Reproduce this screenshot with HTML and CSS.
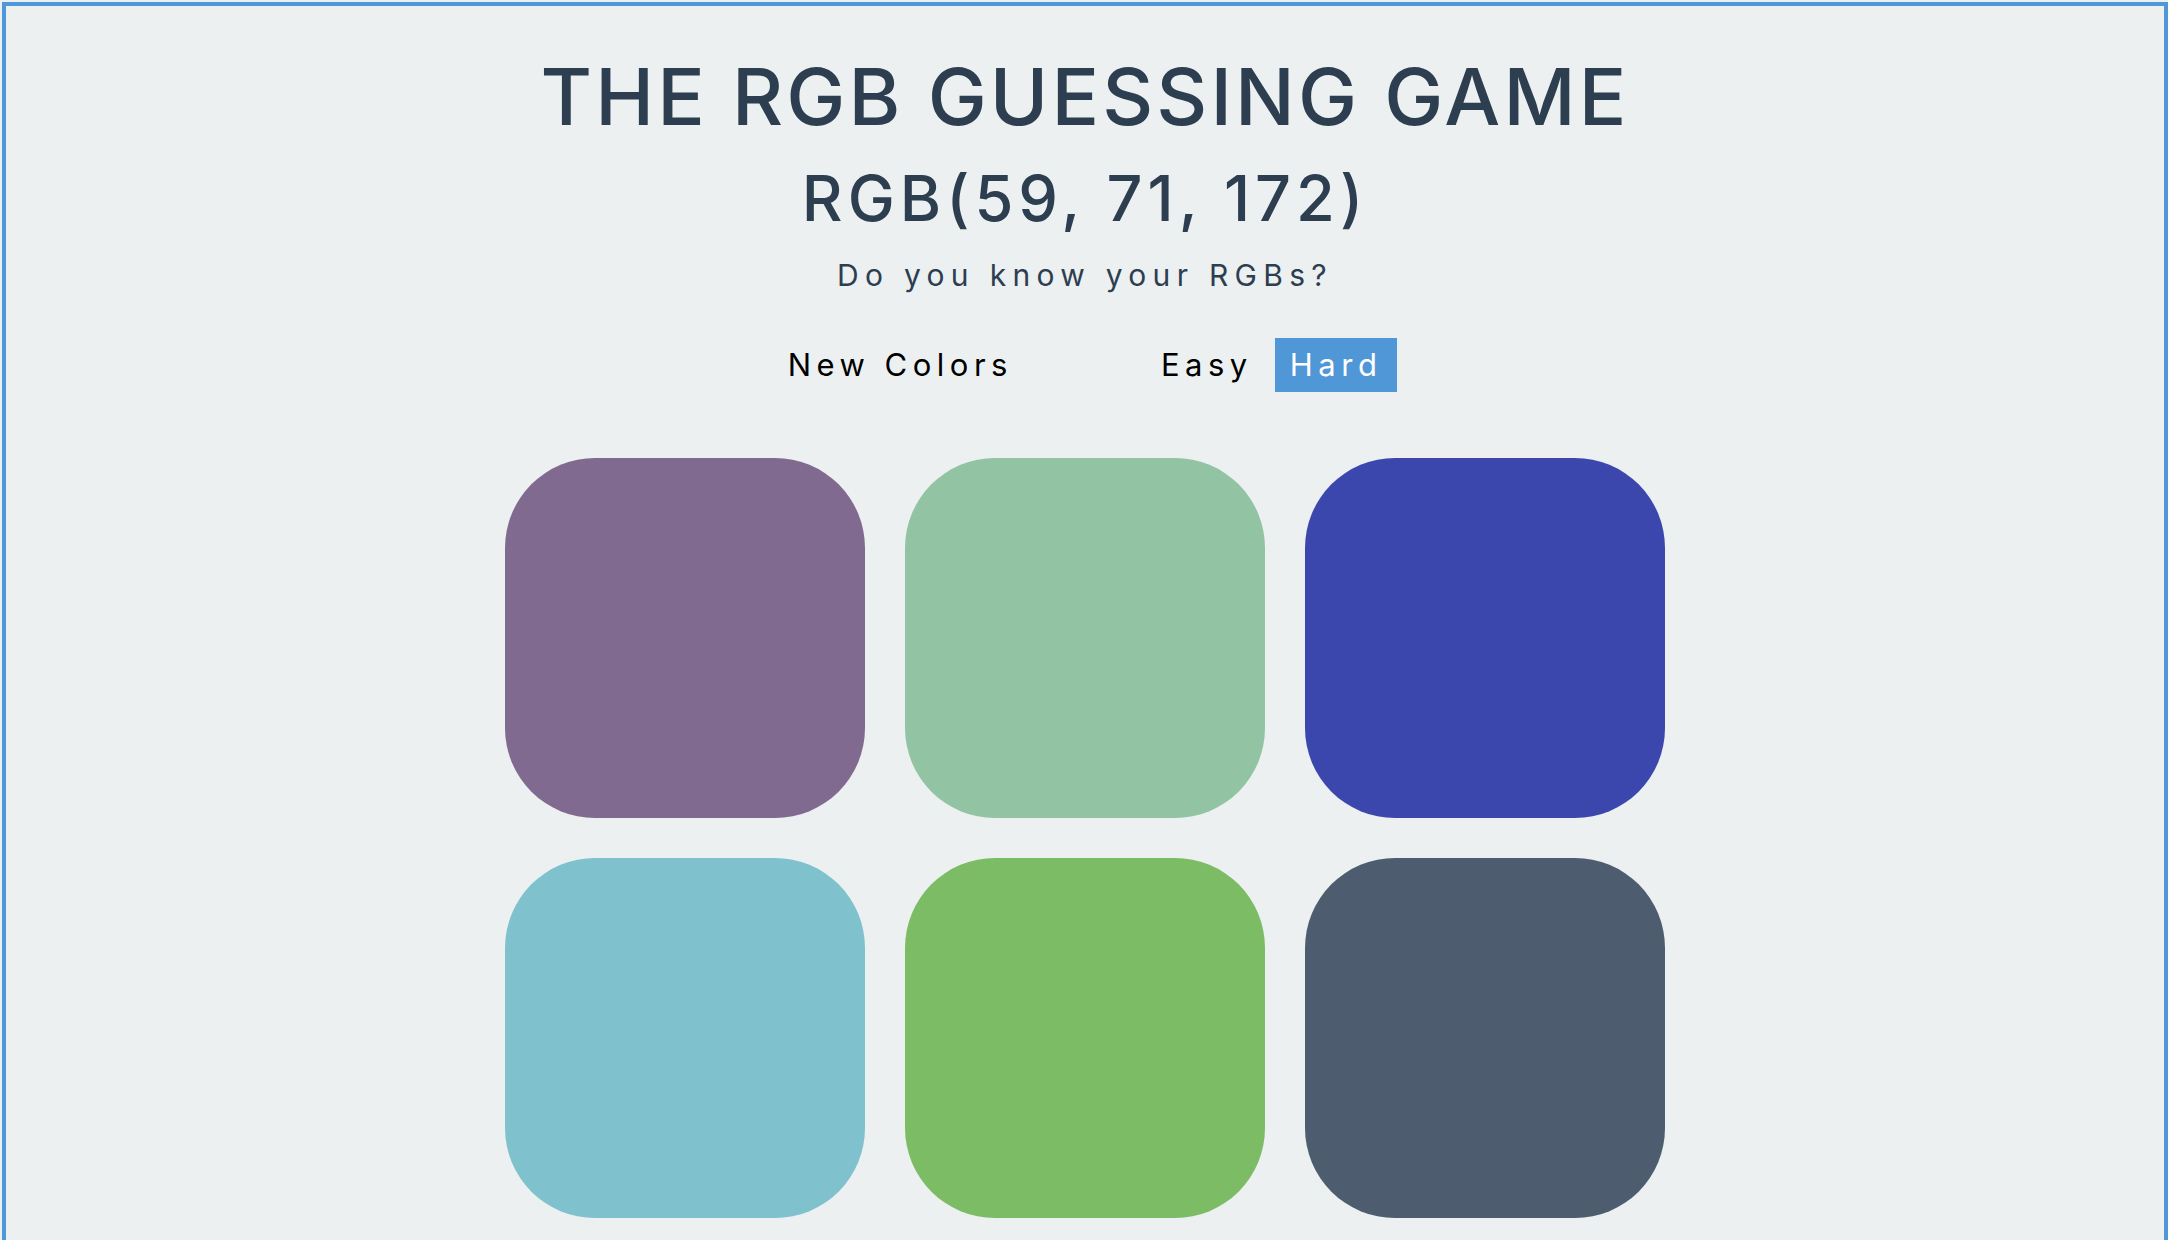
FILE: index.html
```html
<!DOCTYPE html>
<html lang="en">
<head>
<meta charset="utf-8">
<title>The RGB Guessing Game</title>
<link rel="stylesheet" href="styles.css">
</head>
<body>
<div class="frame">
  <h1 class="title">THE RGB GUESSING GAME</h1>
  <h2 class="target">RGB(59, 71, 172)</h2>
  <p class="message">Do you know your RGBs?</p>
  <div class="controls">
    <button class="btn btn-new">New Colors</button>
    <button class="btn btn-easy">Easy</button>
    <button class="btn btn-hard selected">Hard</button>
  </div>
  <div class="grid">
    <div class="square sq-purple"></div>
    <div class="square sq-mint"></div>
    <div class="square sq-blue"></div>
    <div class="square sq-cyan"></div>
    <div class="square sq-green"></div>
    <div class="square sq-slate"></div>
  </div>
</div>
</body>
</html>
```
FILE: styles.css
```css
html, body {
  margin: 0;
  padding: 0;
  background: #ecf0f1;
}
body {
  font-family: Inter, "Noto Sans", "Liberation Sans", sans-serif;
  color: #2c3e50;
}
.frame {
  box-sizing: border-box;
  width: 2166px;
  margin: 2px 0 0 2px;
  border: 4px solid #4f97d6;
  padding: 51px 0 120px;
  display: flex;
  flex-direction: column;
  align-items: center;
}
.title {
  margin: 0;
  font-size: 79px;
  line-height: 79px;
  font-weight: 500;
  letter-spacing: 3.1px;
}
.target {
  margin: 31px 0 0;
  font-size: 63px;
  line-height: 63px;
  font-weight: 500;
  letter-spacing: 5px;
}
.message {
  margin: 30px 0 0;
  font-size: 30px;
  line-height: 31px;
  font-weight: 400;
  letter-spacing: 6.3px;
}
.controls {
  margin-top: 47px;
  display: flex;
  align-items: center;
}
.btn {
  font-family: inherit;
  font-size: 31px;
  line-height: 54px;
  height: 54px;
  padding: 0 15px;
  border: none;
  background: none;
  color: #000;
  letter-spacing: 5.5px;
  font-weight: 400;
}
.btn-new {
  margin-right: 118px;
}
.btn-easy {
  margin-right: 7px;
}
.btn.selected {
  background: #4f97d6;
  color: #fff;
}
.grid {
  margin-top: 66px;
  display: grid;
  grid-template-columns: repeat(3, 360px);
  grid-auto-rows: 360px;
  gap: 40px;
}
.square {
  border-radius: 25%;
}
.sq-purple { background: #816a8f; }
.sq-mint { background: #92c3a3; }
.sq-blue { background: rgb(59, 71, 172); }
.sq-cyan { background: #7fc2ce; }
.sq-green { background: #7bbc64; }
.sq-slate { background: #4d5c6e; }
```
